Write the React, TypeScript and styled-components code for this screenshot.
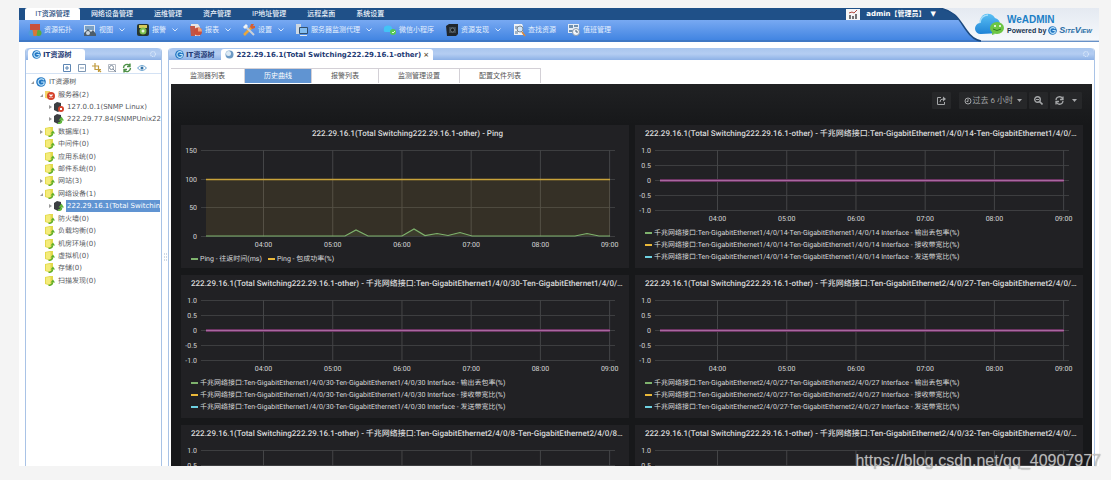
import React from 'react';
import styled, { createGlobalStyle, css } from 'styled-components';

const ui = `"DejaVu Sans", "Noto Sans CJK SC", sans-serif`;
const graph = `Roboto, "Noto Sans CJK SC", sans-serif`;

const GlobalStyle = createGlobalStyle`
  * { box-sizing: border-box; }
  body { margin: 0; background: #f4f4f4; font-family: ${ui}; font-size: 7px; line-height: 12px; }
  button { font: inherit; color: inherit; background: none; border: 0; padding: 0; margin: 0; cursor: pointer; white-space: nowrap; }
  ul { list-style: none; margin: 0; padding: 0; }
  svg { display: block; flex: none; }
`;

const Page = styled.div`
  position: relative;
  display: flex;
  height: 100vh;
  padding: 8px 12px 14px 19px;
`;
const Shell = styled.div`
  flex: 1;
  min-width: 0;
  display: flex;
  flex-direction: column;
  background: #fff;
`;

/* ---------- header ---------- */
const Header = styled.header`
  position: relative;
  color: #fff;
`;
const NavBar = styled.nav`
  display: flex;
  height: 12px;
  padding-left: 6px;
  background: #1f5088;
`;
const NavItem = styled.button<{ $active?: boolean }>`
  padding: 0 10px 0 11px;
  color: #eef4fb;
  font-weight: 500;
  ${p => p.$active && css`
    width: 55px;
    padding: 0;
    color: #234a7c;
    background: #fff;
    border-radius: 2px 2px 0 0;
  `}
`;
const Account = styled.div`
  display: flex;
  align-items: center;
  gap: 6px;
  margin-left: auto;
  margin-right: 163px;
`;
const AccountButton = styled.button`
  display: flex;
  gap: 5px;
  font-weight: 700;
`;
const ToolBar = styled.div`
  display: flex;
  align-items: center;
  gap: 11px;
  height: 22px;
  padding-left: 9px;
  background: linear-gradient(#78a9f2, #4285e2);
  border-bottom: 2px solid #3f78c4;
`;
const Tool = styled.button`
  display: flex;
  align-items: center;
  gap: 2px;
  color: #e4effd;
`;
const Chevron = styled.svg`
  margin-left: 4px;
`;
const Brand = styled.div`
  position: absolute;
  top: 0;
  right: 0;
  width: 160px;
  height: 34px;
`;
const BrandText = styled.div`
  position: absolute;
  top: 6px;
  left: 68px;
  color: #16324f;
  white-space: nowrap;
`;
const BrandName = styled.div`
  font: 700 10px/11px "Liberation Sans", sans-serif;
  color: #1c7fc6;
`;
const BrandLine = styled.div`
  display: flex;
  align-items: center;
  gap: 2px;
  font: 700 7px/11px "Liberation Sans", sans-serif;
`;
const BrandPartner = styled.i`
  font: italic 700 9px/11px "Liberation Sans", sans-serif;
  font-variant: small-caps;
  color: #2a6ea5;
`;

/* ---------- panes ---------- */
const Workspace = styled.div`
  flex: 1;
  min-height: 0;
  display: flex;
  padding: 6px 4px 0 6px;
`;
const Pane = styled.section`
  display: flex;
  flex-direction: column;
  min-width: 0;
  border: solid #a9c3e6;
  border-width: 0 1px;
  border-radius: 4px 4px 0 0;
`;
const SidePane = styled(Pane)`
  flex: 0 0 137px;
`;
const MainPane = styled(Pane)`
  flex: 1;
`;
const PaneHead = styled.div`
  display: flex;
  align-items: flex-end;
  gap: 3px;
  height: 12px;
  flex: none;
  padding: 0 4px 0 2px;
  background: linear-gradient(#a9c6ee, #b4cdf2 50%, #8db1e6);
  border-radius: 4px 4px 0 0;
`;
const PaneTab = styled.button<{ $active?: boolean }>`
  display: flex;
  align-items: center;
  gap: 2px;
  height: 11px;
  padding: 0 4px;
  font-weight: 700;
  color: #233a74;
  background: ${p => (p.$active ? '#fff' : 'transparent')};
  border-radius: 3px 3px 0 0;
`;
const HostTab = styled(PaneTab)`
  text-rendering: geometricPrecision;
`;
const SideTab = styled(PaneTab)`
  width: 57px;
`;
const TabClose = styled.span`
  color: #6b5d46;
`;
const PaneClose = styled.button`
  margin-left: auto;
  align-self: center;
`;
const Splitter = styled.div`
  flex: 0 0 6px;
  display: flex;
  align-items: center;
  justify-content: center;
  color: #9fb3cc;
`;

/* ---------- tree ---------- */
const TreeTools = styled.div`
  display: flex;
  align-items: center;
  justify-content: flex-end;
  gap: 5px;
  height: 14px;
  flex: none;
  margin-bottom: 2px;
  padding: 2px 14px 0 0;
  border-bottom: 1px solid #d4e2f4;
`;
const Tree = styled.ul`
  flex: none;
  display: grid;
  grid-auto-rows: 1fr;
  height: 211px;
`;
const TreeRow = styled.li<{ $level: number }>`
  display: flex;
  align-items: center;
  gap: 2px;
  padding: 0 1px 0 ${p => 5 + p.$level * 9}px;
  color: #55585c;
  overflow: hidden;
`;
const TreeArrow = styled.span`
  width: 3px;
  flex: none;
`;
const TreeLabel = styled.button<{ $selected?: boolean }>`
  flex: ${p => (p.$selected ? 1 : 'none')};
  min-width: 0;
  padding: 0 1px;
  text-align: left;
  text-rendering: geometricPrecision;
  ${p => p.$selected && css`
    color: #fff;
    background: #6094d2;
  `}
`;

/* ---------- main content ---------- */
const SubTabs = styled.div`
  display: flex;
  flex: none;
  height: 15px;
  margin: 8px 2px 0;
`;
const SubTab = styled.button<{ $active?: boolean }>`
  padding: 0 19px;
  color: ${p => (p.$active ? '#fff' : '#555')};
  background: ${p => (p.$active ? '#6094d2' : '#fff')};
  border: solid #d3d0d6;
  border-width: 1px 1px 0 0;
`;
const Dashboard = styled.div`
  flex: 1;
  min-height: 0;
  overflow: hidden;
  margin: 1px 2px 0;
  padding: 0 9px 0 10px;
  background: linear-gradient(#202123, #17181a 40px);
  color: #d8d9da;
  font-family: ${graph};
  text-rendering: geometricPrecision;
`;
const Controls = styled.div`
  display: flex;
  justify-content: flex-end;
  gap: 2px;
  height: 41px;
  padding: 8px 1px 0 0;
`;
const Control = styled.button<{ $spaced?: boolean }>`
  display: flex;
  align-items: center;
  justify-content: center;
  gap: 4px;
  height: 17px;
  padding: 0 5px;
  margin-right: ${p => (p.$spaced ? 6 : 0)}px;
  font-size: 8px;
  color: #a4a6a8;
  background: #262729;
  border-radius: 1px;
`;
const RangeText = styled.span`
  display: flex;
  align-items: center;
  gap: 1px;
`;
const Panels = styled.div`
  display: grid;
  grid-template-columns: minmax(0, 1fr) minmax(0, 1fr);
  gap: 7px 6px;
`;
const Panel = styled.article`
  height: 143px;
  padding-top: 1px;
  background: #212124;
`;
const PanelTitle = styled.h2`
  margin: 0 5px 8px 10px;
  font-size: 8px;
  line-height: 16px;
  font-weight: 500;
  text-align: center;
  white-space: nowrap;
  overflow: hidden;
  text-overflow: ellipsis;
`;
const Plot = styled.div`
  padding: 0 14px 0 20px;
`;
const Canvas = styled.svg`
  width: 100%;
  overflow: visible;
  font-size: 7px;
  fill: #d8d9da;
`;
const Legend = styled.ul<{ $inline?: boolean }>`
  display: flex;
  flex-direction: ${p => (p.$inline ? 'row' : 'column')};
  column-gap: 6px;
  padding-left: 10px;
`;
const LegendItem = styled.li<{ $color: string }>`
  display: flex;
  align-items: center;
  gap: 2px;
  white-space: nowrap;
  &::before {
    content: '';
    width: 7px;
    height: 2px;
    background: ${p => p.$color};
  }
`;
const Watermark = styled.div`
  position: absolute;
  right: 10px;
  bottom: 9px;
  font: 16px/20px "Liberation Sans", sans-serif;
  color: rgba(205, 205, 205, 0.85);
  text-shadow: 0 0 1px rgba(110, 110, 110, 0.8);
`;

/* ---------- icons ---------- */
const toolIcons: Record<string, React.ReactNode> = {
  topology: <><rect x="2" y="1" width="10" height="6" fill="#c8503c" /><circle cx="3.500" cy="10" r="3" fill="#4f9ad8" /><circle cx="10.500" cy="10" r="3" fill="#5aab3d" /><path d="M4.500 7h5l-1 6h-3z" fill="#d9763a" /></>,
  view: <><path d="M1 2h11v8H1z" fill="#dbe6f2" /><path d="M2 3h9v4H2z" fill="#7aa0c4" /><path d="M1 10l4-4 3 3 2-2 3 4v2H1z" fill="#4d5d6b" /><circle cx="5" cy="10" r="2" fill="#c8d4de" /></>,
  alarm: <><rect x="1" y="1" width="12" height="12" rx="2" fill="#27352f" /><rect x="3" y="2" width="8" height="3" fill="#d7c95a" /><circle cx="7" cy="8" r="3.500" fill="#7cbf4e" /><circle cx="7" cy="8" r="1.500" fill="#e8f4df" /></>,
  report: <><path d="M2 1h7l2 3v9H2z" fill="#e8e4e2" /><path d="M1 3h5v10H2z" fill="#c0564a" /><circle cx="9" cy="8.500" r="4" fill="#c94f3c" /><path d="M9 8.500V4.500a4 4 0 0 1 4 4z" fill="#f0a27a" /></>,
  settings: <><path d="M2 12L11 3" stroke="#e7a63e" strokeWidth="2.500" /><path d="M3 3l9 9" stroke="#c9d0d8" strokeWidth="2" /><path d="M1 4l3-3 2 2-3 3z" fill="#f0f3f6" /><path d="M9 1l3 0-1 2 2 0 0 2-3 1-2-2z" fill="#d45f36" /></>,
  agent: <><path d="M1 1h5v10H1z" fill="#cfd8e2" /><rect x="4" y="4" width="9" height="7" rx="1" fill="#33506e" /><rect x="5" y="5" width="7" height="5" fill="#83bdf0" /><path d="M5 12h7v1H5z" fill="#e2e8ee" /></>,
  wechat: <><path d="M1 6a4 3 0 0 1 8-1 3 3 0 0 1-1 4H3a2 2 0 0 1-2-3z" fill="#42c3f5" /><circle cx="10" cy="9" r="3" fill="#56c856" /><path d="M9 9l1 1 2-2" stroke="#e4ffe0" fill="none" /></>,
  discover: <><path d="M1 3l3-2h9v10l-2 2H2z" fill="#20262c" /><rect x="4" y="4" width="7" height="6" fill="#3f4a52" /><circle cx="7.500" cy="7" r="2" fill="#161a1e" stroke="#8a959c" strokeWidth=".6" /></>,
  search: <><path d="M2 1h8l1 2v9H2z" fill="#eef2f7" /><path d="M3 3h3v3H3zM3 8h3v3H3z" fill="#9fb2c6" /><circle cx="8" cy="6" r="3" fill="#cfe5fa" stroke="#7d8790" /><path d="M10 9l3 4" stroke="#d8893c" strokeWidth="1.500" /></>,
  duty: <><path d="M1 1h11v9H1z" fill="#e5edf5" /><path d="M2 2h4v3H2zM7 2h4v2H7zM2 7h4v2H2z" fill="#6f8fae" /><circle cx="9" cy="9" r="3.500" fill="#f4f7fa" stroke="#8b9cae" /><path d="M9 7v2h2" stroke="#4d627a" fill="none" /></>,
};

const Logo = ({ size = 10 }: { size?: number }) => (
  <svg width={size} height={size} viewBox="0 0 10 10">
    <circle cx="5" cy="5" r="4.800" fill="#2377c2" />
    <path d="M8 3.200A3.200 3.200 0 1 0 8 6.800V5H5" fill="none" stroke="#bfe4fb" strokeWidth="1.200" />
  </svg>
);
const Ball = () => (
  <svg width="9" height="9" viewBox="0 0 9 9">
    <circle cx="4.500" cy="4.500" r="4" fill="#6d9ac4" />
    <circle cx="3.500" cy="3.500" r="2.500" fill="#dbe9f4" />
  </svg>
);
const Gear = () => (
  <svg width="8" height="8" viewBox="0 0 8 8">
    <circle cx="4" cy="4" r="2.500" fill="none" stroke="#d4e4f9" strokeWidth="1.200" strokeDasharray="1.200 .6" />
  </svg>
);

type NodeKind = 'root' | 'alert' | 'folder' | 'hostBad' | 'hostOk';
const NodeIcon = ({ kind }: { kind: NodeKind }) => {
  if (kind === 'root') return <Logo />;
  return (
    <svg width="10" height="10" viewBox="0 0 10 10">
      {kind === 'folder' && <><path d="M0 1L5 0h3v8L5 9.500 0 8z" fill="#e3d94c" /><path d="M1 1.500L5.500 1v7.500L1 7.500z" fill="#f4ec7a" /><path d="M3.500 9.500Q7.500 9 7.500 6.500" fill="none" stroke="#5fae2a" strokeWidth="1.500" /><path d="M5.500 6.500L8 3.500l2 3z" fill="#5fae2a" /></>}
      {kind === 'alert' && <><path d="M0 1l5 0v8L0 8z" fill="#f2d469" /><circle cx="6" cy="6" r="4" fill="#d6432b" /><path d="M4.500 4.500l3 3M7.500 4.500l-3 3" stroke="#fff" strokeWidth="1.200" /></>}
      {(kind === 'hostBad' || kind === 'hostOk') && <path d="M0 2l3-2 4 1v7L4 10 0 8z" fill="#3c3f42" />}
      {kind === 'hostBad' && <><circle cx="7" cy="7" r="3" fill="#d6432b" /><path d="M6 6l2 2M8 6l-2 2" stroke="#fff" /></>}
      {kind === 'hostOk' && <><path d="M4 9.500Q7.500 9 7.500 6.500" fill="none" stroke="#5fb53a" strokeWidth="2" /><path d="M4.500 6.500L7.500 2.500l2.500 4z" fill="#5fb53a" /></>}
    </svg>
  );
};

const treeToolIcons: [string, React.ReactNode][] = [
  ['展开', <path d="M1.500 1.500h7v7h-7zM3 5h4M5 3v4" stroke="#5d86b4" />],
  ['折叠', <path d="M1.500 1.500h7v7h-7zM3 5h4" stroke="#7d97b4" />],
  ['定位', <path d="M3 0v6.500h6M0 3h6.500v6M6.500 6.500L9 9" stroke="#c09a3c" strokeWidth="1.200" />],
  ['查找', <><path d="M1.500 1.500h7v7h-7z" stroke="#b7bdc6" /><circle cx="4.500" cy="4.500" r="2" stroke="#8290a0" /><path d="M6 6l3 3" stroke="#8290a0" /></>],
  ['刷新', <path d="M1.500 5a3.500 3.500 0 0 1 6-2.500M8.500 5a3.500 3.500 0 0 1-6 2.500M8 .5v3H5M2 9.500v-3h3" stroke="#4e9148" strokeWidth="1.400" />],
  ['显示', <><path d="M.5 5Q5 0 9.500 5 5 10 .5 5z" stroke="#6ba3cf" /><circle cx="5" cy="5" r="1.500" fill="#2f70a5" stroke="none" /></>],
];

/* ---------- data ---------- */
const navItems = ['IT资源管理', '网络设备管理', '运维管理', '资产管理', 'IP地址管理', '远程桌面', '系统设置'];
const tools: [string, string, boolean][] = [
  ['topology', '资源拓扑', false], ['view', '视图', true], ['alarm', '报警', true], ['report', '报表', true],
  ['settings', '设置', true], ['agent', '服务器监测代理', true], ['wechat', '微信小程序', false],
  ['discover', '资源发现', true], ['search', '查找资源', false], ['duty', '值班管理', false],
];
interface TreeNode { text: string; level: number; kind: NodeKind; arrow?: 'open' | 'closed'; selected?: boolean }
const nodes: TreeNode[] = [
  { text: 'IT资源树', level: 0, kind: 'root', arrow: 'open' },
  { text: '服务器(2)', level: 1, kind: 'alert', arrow: 'open' },
  { text: '127.0.0.1(SNMP Linux)', level: 2, kind: 'hostBad', arrow: 'closed' },
  { text: '222.29.77.84(SNMPUnix22', level: 2, kind: 'hostOk', arrow: 'closed' },
  { text: '数据库(1)', level: 1, kind: 'folder', arrow: 'closed' },
  { text: '中间件(0)', level: 1, kind: 'folder' },
  { text: '应用系统(0)', level: 1, kind: 'folder' },
  { text: '邮件系统(0)', level: 1, kind: 'folder' },
  { text: '网站(3)', level: 1, kind: 'folder', arrow: 'closed' },
  { text: '网络设备(1)', level: 1, kind: 'folder', arrow: 'open' },
  { text: '222.29.16.1(Total Switching', level: 2, kind: 'hostOk', arrow: 'closed', selected: true },
  { text: '防火墙(0)', level: 1, kind: 'folder' },
  { text: '负载均衡(0)', level: 1, kind: 'folder' },
  { text: '机房环境(0)', level: 1, kind: 'folder' },
  { text: '虚拟机(0)', level: 1, kind: 'folder' },
  { text: '存储(0)', level: 1, kind: 'folder' },
  { text: '扫描发现(0)', level: 1, kind: 'folder' },
];
const subTabs = ['监测器列表', '历史曲线', '报警列表', '监测管理设置', '配置文件列表'];
const host = '222.29.16.1(Total Switching222.29.16.1-other)';
const times = ['04:00', '05:00', '06:00', '07:00', '08:00', '09:00'];
const ports = ['1/4/0/14', '1/4/0/30', '2/4/0/27', '2/4/0/8', '2/4/0/32'];
const series: [string, string][] = [
  ['输出丢包率(%)', '#7eb26d'], ['接收带宽比(%)', '#eab839'], ['发送带宽比(%)', '#6ed0e0'],
];

interface ChartProps { height: number; ticks: string[]; children: React.ReactNode }
const Chart = ({ height, ticks, children }: ChartProps) => (
  <Plot>
    <Canvas height={height + 16}>
      {ticks.map((t, i) => {
        const y = Math.round((i * (height - 1)) / (ticks.length - 1)) + 0.5;
        return (
          <g key={t}>
            <line x1="0" x2="100%" y1={y} y2={y} stroke="#3d3e40" />
            <text x="-4" y={y + 2.5} textAnchor="end">{t}</text>
          </g>
        );
      })}
      {times.map((t, i) => {
        const x = `${15.1 + i * 16.72}%`;
        return (
          <g key={t}>
            <line x1={x} x2={x} y1="0" y2={height} stroke="#444547" />
            <text x={x} y={height + 10} textAnchor="middle">{t}</text>
          </g>
        );
      })}
      <svg width="100%" height={height} viewBox={`0 0 414 ${height}`} preserveAspectRatio="none">
        {children}
      </svg>
    </Canvas>
  </Plot>
);

const PingPanel = () => (
  <Panel>
    <PanelTitle>{host} - Ping</PanelTitle>
    <Chart height={87} ticks={['150', '100', '50', '0']}>
      <path d="M5 29H409V86H5z" fill="#eab839" fillOpacity="0.1" />
      <path d="M5 29.500H409" stroke="#c9a33a" strokeWidth="1.500" />
      <path d="M5 86H144L155 80 167 86H201L213 79 224 85.500 236 83.500 247 85.500 259 82.500 271 86H374L386 83.500 398 86H409" fill="#7eb26d" fillOpacity="0.1" stroke="#7eb26d" strokeWidth="1.200" />
    </Chart>
    <Legend $inline>
      <LegendItem $color="#7eb26d">Ping - 往返时间(ms)</LegendItem>
      <LegendItem $color="#eab839">Ping - 包成功率(%)</LegendItem>
    </Legend>
  </Panel>
);

const PortPanel = ({ port }: { port: string }) => {
  const name = `Ten-GigabitEthernet${port}`;
  return (
    <Panel>
      <PanelTitle>{host} - 千兆网络接口:{name}-{name} Interface</PanelTitle>
      <Chart height={61} ticks={['1.0', '0.5', '0', '-0.5', '-1.0']}>
        <path d="M5 30.500H409" stroke="#6c3563" strokeWidth="3" />
        <path d="M5 30.500H409" stroke="#a868a0" />
      </Chart>
      <Legend>
        {series.map(([label, color]) => (
          <LegendItem key={label} $color={color}>千兆网络接口:{name}-{name} Interface - {label}</LegendItem>
        ))}
      </Legend>
    </Panel>
  );
};

const Caret = () => (
  <svg width="5" height="3" viewBox="0 0 5 3"><path d="M0 0h5L2.500 3z" fill="currentColor" /></svg>
);

export default function App() {
  return (
    <Page>
      <GlobalStyle />
      <Shell>
        <Header>
          <NavBar>
            {navItems.map((n, i) => <NavItem key={n} $active={i === 0}>{n}</NavItem>)}
            <Account>
              <svg width="14" height="11" viewBox="0 0 14 11">
                <path d="M0 0h14v11H0z" fill="#f6f6f6" />
                <path d="M4 10V6M7 10V7M10 10V5" stroke="#4a4a4a" strokeWidth="1.500" />
                <path d="M3 4l3-1 2 1 3-3" stroke="#b0483c" fill="none" />
              </svg>
              <AccountButton><span>admin【管理员】</span><span>▼</span></AccountButton>
            </Account>
          </NavBar>
          <ToolBar>
            {tools.map(([icon, label, menu]) => (
              <Tool key={icon}>
                <svg width="14" height="14" viewBox="0 0 14 14">{toolIcons[icon]}</svg>
                {label}
                {menu && <Chevron width="6" height="4" viewBox="0 0 6 4"><path d="M.5.5L3 3 5.500.5" fill="none" stroke="#d6e6fc" /></Chevron>}
              </Tool>
            ))}
          </ToolBar>
          <Brand>
            <svg width="160" height="34" viewBox="0 0 160 34">
              <defs>
                <linearGradient id="brandBg" x1="0" y1="0" x2="0" y2="1">
                  <stop offset="0" stopColor="#e4e9f1" /><stop offset="1" stopColor="#f6f9fc" />
                </linearGradient>
                <linearGradient id="cloud" x1="0" y1="0" x2="0" y2="1">
                  <stop offset="0" stopColor="#5ac0f4" /><stop offset="1" stopColor="#1f83d6" />
                </linearGradient>
              </defs>
              <path d="M0 0C18 3 21 14 28 23 32 29 36 32 42 33L160 33V0z" fill="url(#brandBg)" />
              <path d="M0 0C18 3 21 14 28 23 32 29 36 32 42 33" fill="none" stroke="#1c4a80" strokeWidth="1.500" />
              <path d="M42 33H160" stroke="#8fa9cc" />
              <path d="M42 26a5.500 5.500 0 0 1-1-11 8 8 0 0 1 15-5 7 7 0 0 1 5 7v8z" fill="url(#cloud)" />
              <path d="M41 15a8 8 0 0 1 8-8" fill="none" stroke="#a6defa" strokeWidth="1.500" />
              <ellipse cx="58" cy="20" rx="7" ry="6" fill="#6cc644" />
              <path d="M53 24l0 3 3-1z" fill="#6cc644" />
              <circle cx="56" cy="18" r="1" fill="#fff" /><circle cx="61" cy="18" r="1" fill="#fff" />
              <path d="M54 21q4 3 8 0" fill="none" stroke="#2f7a1e" />
            </svg>
            <BrandText>
              <BrandName>WeADMIN</BrandName>
              <BrandLine>Powered by <Logo size={9} /><BrandPartner>SiteView</BrandPartner></BrandLine>
            </BrandText>
          </Brand>
        </Header>

        <Workspace>
          <SidePane>
            <PaneHead>
              <SideTab $active><Logo size={9} />IT资源树</SideTab>
              <PaneClose aria-label="收起"><Gear /></PaneClose>
            </PaneHead>
            <TreeTools>
              {treeToolIcons.map(([label, drawing]) => (
                <button key={label} aria-label={label}>
                  <svg width="10" height="10" viewBox="0 0 10 10" fill="none">{drawing}</svg>
                </button>
              ))}
            </TreeTools>
            <Tree>
              {nodes.map(n => (
                <TreeRow key={n.text} $level={n.level}>
                  <TreeArrow>
                    {n.arrow && (
                      <svg width="3" height="4" viewBox="0 0 3 4">
                        <path d={n.arrow === 'open' ? 'M3 1v3H0z' : 'M0 0l3 2-3 2z'} fill="#9a9a9a" />
                      </svg>
                    )}
                  </TreeArrow>
                  <NodeIcon kind={n.kind} />
                  <TreeLabel $selected={n.selected}>{n.text}</TreeLabel>
                </TreeRow>
              ))}
            </Tree>
          </SidePane>
          <Splitter>
            <svg width="3" height="8" viewBox="0 0 3 8"><path d="M0 1h1M2 1h1M0 4h1M2 4h1M0 7h1M2 7h1" stroke="currentColor" /></svg>
          </Splitter>
          <MainPane>
            <PaneHead>
              <PaneTab><Logo size={9} />IT资源树</PaneTab>
              <HostTab $active><Ball />{host}<TabClose>×</TabClose></HostTab>
              <PaneClose aria-label="收起"><Gear /></PaneClose>
            </PaneHead>
            <SubTabs>
              {subTabs.map(t => <SubTab key={t} $active={t === '历史曲线'}>{t}</SubTab>)}
            </SubTabs>
            <Dashboard>
              <Controls>
                <Control $spaced aria-label="分享">
                  <svg width="9" height="9" viewBox="0 0 9 9" fill="none" stroke="currentColor"><path d="M4 1.500H.5v7h7V6M3 6q0-3 3-3" /><path d="M6 .5L9 3 6 5.500z" fill="currentColor" stroke="none" /></svg>
                </Control>
                <Control>
                  <RangeText>
                    <svg width="8" height="8" viewBox="0 0 8 8" fill="none" stroke="currentColor"><circle cx="4" cy="4" r="3" /><path d="M4 2v2.500H2.500" /></svg>
                    过去 6 小时
                  </RangeText>
                  <Caret />
                </Control>
                <Control aria-label="缩小">
                  <svg width="9" height="9" viewBox="0 0 9 9" fill="none" stroke="currentColor"><circle cx="3.500" cy="3.500" r="2.800" strokeWidth="1.400" /><path d="M2 3.500h3" /><path d="M5.500 5.500l3 3" strokeWidth="1.600" /></svg>
                </Control>
                <Control aria-label="刷新">
                  <svg width="9" height="9" viewBox="0 0 9 9" fill="none" stroke="currentColor" strokeWidth="1.300"><path d="M1 4a3.500 3.500 0 0 1 6.500-1.500M8 5a3.500 3.500 0 0 1-6.500 1.500M8 .5v3H5M1 8.500v-3h3" /></svg>
                  <span />
                  <Caret />
                </Control>
              </Controls>
              <Panels>
                <PingPanel />
                {ports.map(p => <PortPanel key={p} port={p} />)}
              </Panels>
            </Dashboard>
          </MainPane>
        </Workspace>
      </Shell>
      <Watermark>https://blog.csdn.net/qq_40907977</Watermark>
    </Page>
  );
}
